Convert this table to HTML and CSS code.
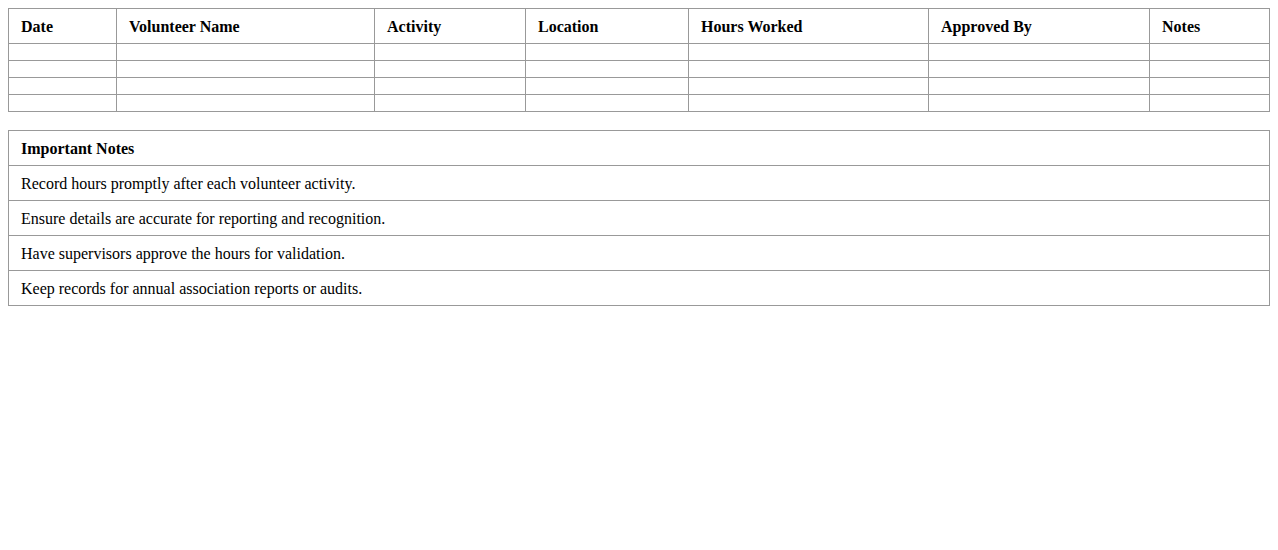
FILE: index.html
```html
<!DOCTYPE html>
<html>
<head>
<meta charset="utf-8">
<link rel="stylesheet" href="styles.css">
</head>
<body>
<table class="log">
  <colgroup>
    <col class="c-date"><col class="c-name"><col class="c-act"><col class="c-loc"><col class="c-hours"><col class="c-appr"><col class="c-notes">
  </colgroup>
  <thead>
    <tr><th>Date</th><th>Volunteer Name</th><th>Activity</th><th>Location</th><th>Hours Worked</th><th>Approved By</th><th>Notes</th></tr>
  </thead>
  <tbody>
    <tr><td></td><td></td><td></td><td></td><td></td><td></td><td></td></tr>
    <tr><td></td><td></td><td></td><td></td><td></td><td></td><td></td></tr>
    <tr><td></td><td></td><td></td><td></td><td></td><td></td><td></td></tr>
    <tr><td></td><td></td><td></td><td></td><td></td><td></td><td></td></tr>
  </tbody>
</table>
<table class="notes">
  <thead><tr><th>Important Notes</th></tr></thead>
  <tbody>
    <tr><td>Record hours promptly after each volunteer activity.</td></tr>
    <tr><td>Ensure details are accurate for reporting and recognition.</td></tr>
    <tr><td>Have supervisors approve the hours for validation.</td></tr>
    <tr><td>Keep records for annual association reports or audits.</td></tr>
  </tbody>
</table>
</body>
</html>
```
FILE: styles.css
```css
body {
  margin: 8px;
  font-family: "Liberation Serif", "Times New Roman", serif;
  font-size: 16px;
  color: #000;
  background: #fff;
}
table {
  width: 100%;
  border-collapse: collapse;
}
th, td {
  border: 1px solid #999;
  padding: 9px 12px 7px;
  text-align: left;
  line-height: 18px;
}
tbody td:empty { padding: 8px 12px; }
th { font-weight: bold; }
.log { table-layout: fixed; margin-bottom: 18px; }
.c-date { width: 108px; }
.c-name { width: 258px; }
.c-act { width: 151px; }
.c-loc { width: 163px; }
.c-hours { width: 240px; }
.c-appr { width: 221px; }
```
